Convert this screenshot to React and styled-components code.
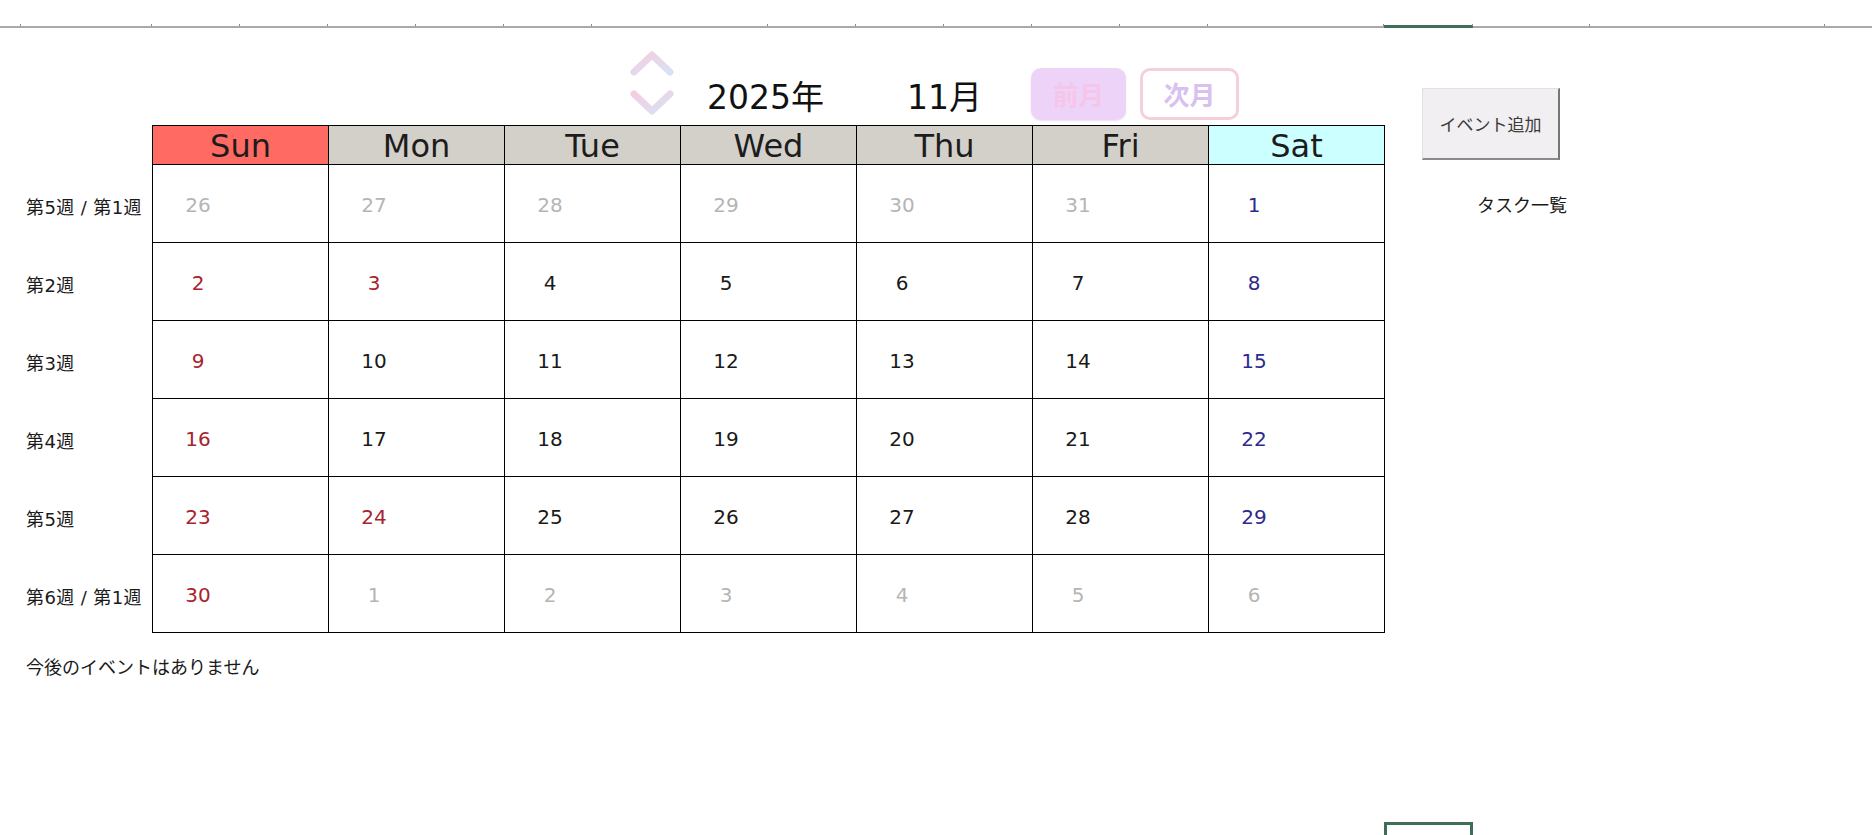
import React from "react";
import styled, { createGlobalStyle } from "styled-components";

const GlobalStyle = createGlobalStyle`
  html, body {
    margin: 0;
    padding: 0;
    background: #ffffff;
  }
  body {
    font-family: "DejaVu Sans", "Noto Sans CJK JP", sans-serif;
    color: #1a1a1a;
    overflow: hidden;
  }
`;

const Page = styled.div`
  position: relative;
  width: 1872px;
  height: 835px;
  overflow: hidden;
`;

const Ruler = styled.div`
  display: flex;
  height: 28px;
  box-sizing: border-box;
  border-bottom: 2px solid #a9a9a9;
`;

const RulerCol = styled.div`
  position: relative;
  flex: 0 0 ${(p) => p.$w}px;

  &::after {
    content: "";
    position: absolute;
    right: 0;
    bottom: 0;
    width: 1px;
    height: 2px;
    background: #8c8c8c;
  }

  &::before {
    content: "";
    display: ${(p) => (p.$active ? "block" : "none")};
    position: absolute;
    left: 0;
    right: 0;
    bottom: -2px;
    height: 3px;
    background: #3e6f56;
  }
`;

const Sheet = styled.div`
  display: flex;
`;

const LeftBlock = styled.div`
  width: 1385px;
  flex: 0 0 1385px;
`;

const TitleRow = styled.div`
  display: flex;
  align-items: flex-start;
  height: 97px;
  padding-left: 630px;
  box-sizing: border-box;
`;

const Chevrons = styled.svg`
  margin-top: 22px;
  flex: 0 0 auto;
`;

const YearLabel = styled.div`
  margin-top: 53px;
  margin-left: 33px;
  font-size: 33px;
  line-height: 1;
  color: #111;
  white-space: nowrap;
`;

const MonthLabel = styled(YearLabel)`
  margin-left: 83px;
`;

const NavButton = styled.button`
  margin-top: 40px;
  margin-left: ${(p) => p.$gap}px;
  width: ${(p) => p.$w}px;
  height: 52px;
  box-sizing: border-box;
  border-radius: 10px;
  font-family: "Noto Sans CJK JP", sans-serif;
  font-weight: 700;
  font-size: 26px;
  line-height: 1;
  padding: 0;
  cursor: pointer;
  background: ${(p) => (p.$filled ? "#eed3f8" : "#ffffff")};
  color: ${(p) => (p.$filled ? "#f5c6ea" : "#d8c1ee")};
  border: ${(p) => (p.$filled ? "none" : "3px solid #f6cfdc")};
  box-shadow: ${(p) => (p.$filled ? "0 1px 2px rgba(200, 160, 210, 0.35)" : "none")};
`;

const Body = styled.div`
  display: flex;
`;

const WeekColumn = styled.div`
  width: 152px;
  flex: 0 0 152px;
  padding-top: 40px;
`;

const WeekLabel = styled.div`
  height: 78px;
  display: flex;
  align-items: center;
  padding: 3px 0 0 26px;
  box-sizing: border-box;
  font-size: 18px;
  letter-spacing: 0.4px;
  white-space: pre;
  color: #1a1a1a;
`;

const Calendar = styled.div`
  display: grid;
  grid-template-columns: repeat(7, 176px);
  grid-template-rows: 39px repeat(6, 78px);
  border-top: 1px solid #000;
  border-left: 1px solid #000;
  align-self: flex-start;
`;

const headBg = {
  sun: "#ff6a63",
  sat: "#ccffff",
  day: "#d3d0ca",
};

const HeadCell = styled.div`
  box-sizing: border-box;
  border-right: 1px solid #000;
  border-bottom: 1px solid #000;
  background: ${(p) => headBg[p.$kind]};
  text-align: center;
  font-size: 32px;
  line-height: 35px;
  padding-top: 3px;
  color: #1c1c1c;
`;

const DayCell = styled.div`
  box-sizing: border-box;
  border-right: 1px solid #000;
  border-bottom: 1px solid #000;
  display: flex;
  align-items: center;
  padding-top: 3px;
`;

const toneColor = {
  red: "#a8232d",
  blue: "#2e2a8c",
  gray: "#b5b5b5",
  plain: "#1a1a1a",
};

const DayNum = styled.span`
  width: 30px;
  margin-left: 30px;
  text-align: center;
  font-size: 20px;
  color: ${(p) => toneColor[p.$tone]};
`;

const Notice = styled.div`
  margin-top: 22px;
  padding-left: 26px;
  font-size: 18px;
  line-height: 26px;
  color: #1a1a1a;
`;

const SidePanel = styled.div`
  margin-left: 37px;
  padding-top: 60px;
  display: flex;
  flex-direction: column;
  align-items: flex-start;
`;

const AddButton = styled.button`
  width: 138px;
  height: 72px;
  box-sizing: border-box;
  background: #f1eff2;
  border: none;
  border-top: 1px solid #e2e0e3;
  border-left: 1px solid #e2e0e3;
  border-right: 2px solid #777;
  border-bottom: 2px solid #8a8a8a;
  font-family: "Noto Sans CJK JP", sans-serif;
  font-size: 17px;
  color: #3a3a3a;
  padding: 0;
  cursor: pointer;
`;

const TaskTitle = styled.div`
  margin-top: 31px;
  margin-left: 55px;
  font-family: "Noto Sans CJK JP", sans-serif;
  font-size: 18px;
  line-height: 26px;
  color: #1a1a1a;
`;

const SelectedCell = styled.div`
  position: absolute;
  left: 1384px;
  top: 822px;
  width: 89px;
  height: 40px;
  box-sizing: border-box;
  border: 3px solid #3e6f56;
`;

const rulerCols = [
  { w: 21 }, { w: 131 }, { w: 88 }, { w: 88 }, { w: 88 }, { w: 88 }, { w: 88 },
  { w: 176 }, { w: 88 }, { w: 88 }, { w: 88 }, { w: 88 }, { w: 88 }, { w: 176 },
  { w: 89, active: true }, { w: 117 }, { w: 235 },
];

const heads = [
  { label: "Sun", kind: "sun" },
  { label: "Mon", kind: "day" },
  { label: "Tue", kind: "day" },
  { label: "Wed", kind: "day" },
  { label: "Thu", kind: "day" },
  { label: "Fri", kind: "day" },
  { label: "Sat", kind: "sat" },
];

const weekLabels = ["第5週 / 第1週", "第2週", "第3週", "第4週", "第5週", "第6週 / 第1週"];

// November 2025, with the spill-over days of Oct and Dec
const holidays = [3, 23, 24];

function buildDays() {
  const days = [];
  [26, 27, 28, 29, 30, 31].forEach((d) => days.push({ d, other: true }));
  for (let d = 1; d <= 30; d++) days.push({ d, other: false });
  [1, 2, 3, 4, 5, 6].forEach((d) => days.push({ d, other: true }));
  return days.map((day, i) => {
    const dow = i % 7;
    let tone = "plain";
    if (day.other) tone = "gray";
    else if (dow === 0 || holidays.includes(day.d)) tone = "red";
    else if (dow === 6) tone = "blue";
    return { ...day, tone, key: i };
  });
}

function ChevronIcon() {
  return (
    <Chevrons width="44" height="66" viewBox="0 0 44 66">
      <defs>
        <linearGradient id="chev" x1="0" y1="0" x2="1" y2="1">
          <stop offset="0" stopColor="#f4cee0" />
          <stop offset="1" stopColor="#d7e2f4" />
        </linearGradient>
      </defs>
      <path d="M4 22 L22 5 L40 22" fill="none" stroke="url(#chev)" strokeWidth="7" strokeLinecap="round" strokeLinejoin="round" />
      <path d="M4 44 L22 61 L40 44" fill="none" stroke="url(#chev)" strokeWidth="7" strokeLinecap="round" strokeLinejoin="round" />
    </Chevrons>
  );
}

export default function App() {
  const days = buildDays();

  return (
    <Page>
      <GlobalStyle />
      <Ruler>
        {rulerCols.map((c, i) => (
          <RulerCol key={i} $w={c.w} $active={c.active} />
        ))}
      </Ruler>
      <Sheet>
        <LeftBlock>
          <TitleRow>
            <ChevronIcon />
            <YearLabel>2025年</YearLabel>
            <MonthLabel>11月</MonthLabel>
            <NavButton $filled $gap={49} $w={95}>前月</NavButton>
            <NavButton $gap={14} $w={99}>次月</NavButton>
          </TitleRow>
          <Body>
            <WeekColumn>
              {weekLabels.map((w, i) => (
                <WeekLabel key={i}>{w}</WeekLabel>
              ))}
            </WeekColumn>
            <Calendar>
              {heads.map((h) => (
                <HeadCell key={h.label} $kind={h.kind}>{h.label}</HeadCell>
              ))}
              {days.map((day) => (
                <DayCell key={day.key}>
                  <DayNum $tone={day.tone}>{day.d}</DayNum>
                </DayCell>
              ))}
            </Calendar>
          </Body>
          <Notice>今後のイベントはありません</Notice>
        </LeftBlock>
        <SidePanel>
          <AddButton>イベント追加</AddButton>
          <TaskTitle>タスク一覧</TaskTitle>
        </SidePanel>
      </Sheet>
      <SelectedCell />
    </Page>
  );
}
